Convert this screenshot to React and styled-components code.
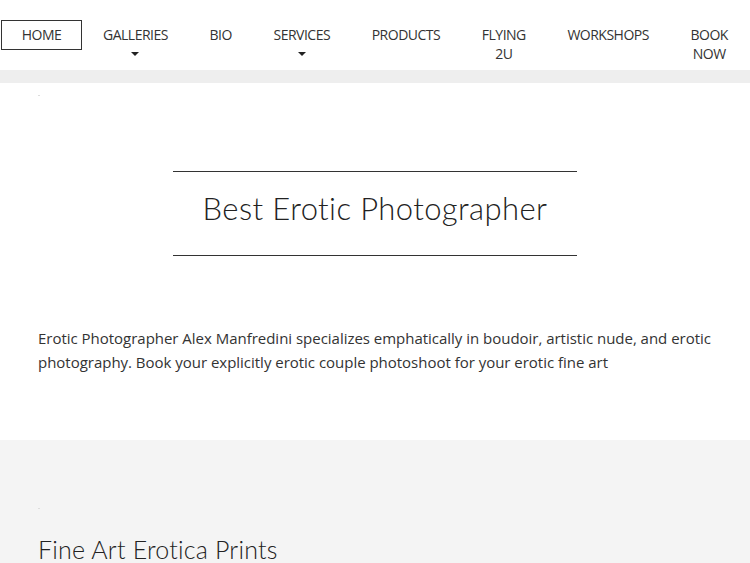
import React from 'react'
import styled, { createGlobalStyle } from 'styled-components'

const GlobalStyle = createGlobalStyle`
    html, body {
        margin: 0;
        padding: 0;
        background: #ffffff;
    }
    body {
        font-family: 'Open Sans', 'Liberation Sans', sans-serif;
        color: #333333;
        overflow: hidden;
    }
`

const Header = styled.header`
    background: #ffffff;
    padding: 20px 0 0 1px;
    height: 50px;
`

const Menu = styled.ul`
    display: flex;
    align-items: flex-start;
    margin: 0;
    padding: 0;
    list-style: none;
`

const MenuItem = styled.li`
    display: flex;
    flex-direction: column;
    align-items: center;
    padding: 4px 19.8px 5px;
    border: 1px solid ${(p) => (p.$active ? '#333333' : 'transparent')};
    font-size: 14px;
    line-height: 19px;
    letter-spacing: -0.5px;
    text-transform: uppercase;
    text-align: center;
    color: #333333;
    white-space: nowrap;
`

const Caret = styled.span`
    display: block;
    width: 0;
    height: 0;
    margin-top: 8px;
    border-left: 4px solid transparent;
    border-right: 4px solid transparent;
    border-top: 4px solid #222222;
`

const Band = styled.div`
    height: 13px;
    background: #eeeeee;
`

const Section = styled.section`
    background: ${(p) => p.$bg};
    padding: ${(p) => p.$pad};
`

const Dot = styled.div`
    width: 2px;
    height: 1px;
    margin-left: 38px;
    background: #dddddd;
`

const Title = styled.h1`
    width: 404px;
    margin: 75px auto 0;
    padding: 18px 0 29px;
    border-top: 1px solid #333333;
    border-bottom: 1px solid #333333;
    font-family: 'Lato', 'Liberation Sans', sans-serif;
    font-weight: 300;
    font-size: 31px;
    line-height: 36px;
    letter-spacing: 0.4px;
    text-align: center;
    color: #222222;
`

const Text = styled.p`
    margin: 70px 20px 0 38px;
    font-size: 15px;
    line-height: 24px;
    letter-spacing: -0.02px;
    color: #333333;
`

const SubTitle = styled.h2`
    margin: 24px 38px 0;
    font-family: 'Lato', 'Liberation Sans', sans-serif;
    font-weight: 300;
    font-size: 25px;
    line-height: 32px;
    letter-spacing: 0.2px;
    color: #222222;
`

const items = [
    { label: 'Home', active: true },
    { label: 'Galleries', caret: true },
    { label: 'Bio' },
    { label: 'Services', caret: true },
    { label: 'Products' },
    { label: ['Flying', '2U'] },
    { label: 'Workshops' },
    { label: ['Book', 'Now'] },
]

const App = () => {
    return (
        <>
            <GlobalStyle />
            <Header>
                <Menu>
                    {items.map((item, i) => (
                        <MenuItem key={i} $active={item.active}>
                            {Array.isArray(item.label)
                                ? item.label.map((l) => <span key={l}>{l}</span>)
                                : item.label}
                            {item.caret && <Caret />}
                        </MenuItem>
                    ))}
                </Menu>
            </Header>
            <Band />
            <Section $bg="#ffffff" $pad="12px 0 66px">
                <Dot />
                <Title>Best Erotic Photographer</Title>
                <Text>
                    Erotic Photographer Alex Manfredini specializes emphatically in
                    boudoir, artistic nude, and erotic photography. Book your
                    explicitly erotic couple photoshoot for your erotic fine art
                </Text>
            </Section>
            <Section $bg="#f4f4f4" $pad="68px 0 40px">
                <Dot />
                <SubTitle>Fine Art Erotica Prints</SubTitle>
            </Section>
        </>
    )
}

export default App
